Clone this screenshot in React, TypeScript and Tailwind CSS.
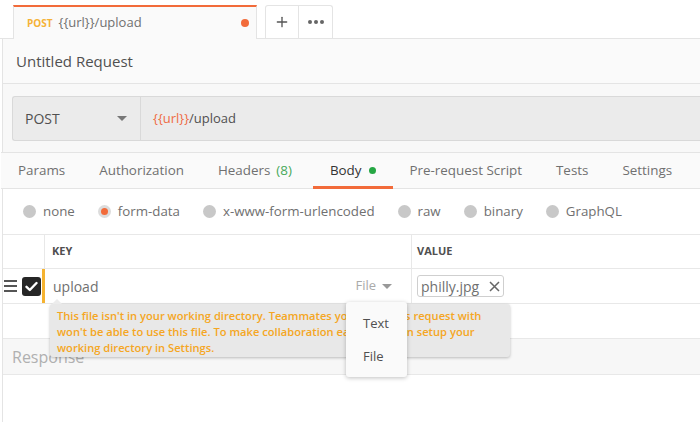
import { Plus } from 'lucide-react';

const font = { fontFamily: '"Open Sans", "Liberation Sans", sans-serif' };

function Radio({ label, checked }: { label: string; checked?: boolean }) {
  return (
    <div className="flex items-center gap-[7px]">
      {checked ? (
        <span className="w-[13px] h-[13px] rounded-full bg-[#dcdcdc] flex items-center justify-center">
          <span className="w-[7px] h-[7px] rounded-full bg-[#f26b3a]" />
        </span>
      ) : (
        <span className="w-[13px] h-[13px] rounded-full bg-[#c8c8c8]" />
      )}
      <span className="text-[13.3px] text-[#707070]">{label}</span>
    </div>
  );
}

const tabs = ['Params', 'Authorization', 'Headers', 'Body', 'Pre-request Script', 'Tests', 'Settings'];

export default function App() {
  return (
    <div className="relative w-[700px] h-[422px] overflow-hidden bg-white" style={font}>
      {/* request tabs */}
      <div className="h-[39px] flex items-end pl-[13px] border-b border-[#e4e4e4]">
        <div className="w-[244px] h-[34px] -mb-px bg-[#fafafa] border-t-2 border-t-[#f26b3a] border-x border-[#e4e4e4] flex items-center pl-[13px] pr-[7px]">
          <span className="text-[10px] font-bold text-[#f5b236] mr-[6px]">POST</span>
          <span className="text-[13px] text-[#707070]">{'{{url}}/upload'}</span>
          <span className="ml-auto w-[8px] h-[8px] rounded-full bg-[#f26b3a]" />
        </div>
        <div className="ml-2 h-[33px] flex border-x border-t border-[#e4e4e4] rounded-t-[3px] bg-white">
          <div className="w-[33px] flex items-center justify-center border-r border-[#e4e4e4]">
            <Plus size={16} strokeWidth={2} className="text-[#555]" />
          </div>
          <div className="w-[33px] flex items-center justify-center gap-[2px]">
            <span className="w-[4px] h-[4px] rounded-full bg-[#666]" />
            <span className="w-[4px] h-[4px] rounded-full bg-[#666]" />
            <span className="w-[4px] h-[4px] rounded-full bg-[#666]" />
          </div>
        </div>
      </div>

      <div className="ml-[2px] border-l border-[#e4e4e4] h-[383px] flex flex-col">
        <div className="h-[45px] shrink-0 flex items-center pl-[13px] bg-[#fafafa] border-b border-[#e4e4e4]">
          <span className="text-[15px] text-[#505050]">Untitled Request</span>
        </div>

        <div className="bg-[#f8f8f8] pt-[12px] pb-[11px] pl-[9px] shrink-0">
          <div className="h-[45px] flex bg-[#ebebeb] border-y border-l border-[#d9d9d9] rounded-l-[3px]">
            <div className="w-[128px] flex items-center pl-[12px] pr-[13px] border-r border-[#d9d9d9]">
              <span className="text-[14px] text-[#505050]">POST</span>
              <span className="ml-auto w-0 h-0 border-x-[5px] border-x-transparent border-t-[5px] border-t-[#777]" />
            </div>
            <div className="flex items-center pl-[12px] text-[13px]">
              <span className="text-[#ef6b45]">{'{{url}}'}</span>
              <span className="text-[#505050]">/upload</span>
            </div>
          </div>
        </div>

        <div className="h-[37px] shrink-0 flex bg-[#fafafa] border-y border-[#e4e4e4] -ml-[2px]">
          {tabs.map((t) => (
            <div
              key={t}
              className={
                'relative flex items-center pl-[17px] text-[13.4px] ' +
                (t === 'Headers' ? 'pr-[21px] ' : 'pr-[17px] ') +
                (t === 'Body' ? 'text-[#333]' : 'text-[#707070]')
              }
            >
              {t}
              {t === 'Headers' && <span className="ml-[6px] text-[#48a95b]">(8)</span>}
              {t === 'Body' && <span className="ml-[7px] w-[7px] h-[7px] rounded-full bg-[#26a744]" />}
              {t === 'Body' && <span className="absolute left-0 right-0 -bottom-px h-[3px] bg-[#f26b3a]" />}
            </div>
          ))}
        </div>

        <div className="h-[45px] shrink-0 flex items-center gap-[23px] pl-[20px] bg-white">
          <Radio label="none" />
          <Radio label="form-data" checked />
          <Radio label="x-www-form-urlencoded" />
          <Radio label="raw" />
          <Radio label="binary" />
          <Radio label="GraphQL" />
        </div>

        <div className="h-[35px] shrink-0 flex border-y border-[#e8e8e8]">
          <div className="w-[42px] border-r border-[#e8e8e8]" />
          <div className="w-[367px] border-r border-[#e8e8e8] flex items-center pl-[7px] text-[11px] font-bold text-[#505050]">
            KEY
          </div>
          <div className="flex items-center pl-[5px] text-[11px] font-bold text-[#505050]">VALUE</div>
        </div>

        <div className="h-[35px] shrink-0 flex border-b border-[#e8e8e8]">
          <div className="w-[42px] flex items-center border-r-[3px] border-[#f5b331]">
            <div className="ml-[1px] w-[13px] flex flex-col gap-[3px]">
              <span className="h-[2px] bg-[#555]" />
              <span className="h-[2px] bg-[#555]" />
              <span className="h-[2px] bg-[#555]" />
            </div>
            <div className="ml-[5px] w-[19px] h-[19px] rounded-[3px] bg-[#262626] flex items-center justify-center">
              <svg width="13" height="11" viewBox="0 0 13 11">
                <path d="M1.5 5.8 L4.8 9 L11.5 2" fill="none" stroke="#fff" strokeWidth="2.4" strokeLinecap="round" strokeLinejoin="round" />
              </svg>
            </div>
          </div>
          <div className="w-[367px] border-r border-[#e8e8e8] flex items-center pl-[8px] pr-[19px]">
            <span className="text-[14px] text-[#707070]">upload</span>
            <span className="ml-auto text-[13px] text-[#aaa]">File</span>
            <span className="ml-[6px] w-0 h-0 border-x-[5px] border-x-transparent border-t-[5px] border-t-[#999]" />
          </div>
          <div className="flex items-center pl-[5px]">
            <div className="h-[22px] flex items-center gap-[10px] border border-[#cfcfcf] rounded-[3px] pl-[3px] pr-[3px]">
              <span className="text-[14px] text-[#707070]">philly.jpg</span>
              <svg width="11" height="11" viewBox="0 0 11 11">
                <path d="M1 1 L10 10 M10 1 L1 10" stroke="#666" strokeWidth="1.5" />
              </svg>
            </div>
          </div>
        </div>

        <div className="h-[35px] shrink-0 border-b border-[#e8e8e8] bg-white" />

        <div className="h-[36px] shrink-0 flex items-center pl-[9px] bg-[#f7f7f7] border-b border-[#e8e8e8]">
          <span className="text-[16px] text-[#b0b0b0]">Response</span>
        </div>
        <div className="flex-1 bg-white" />
      </div>

      {/* warning tooltip */}
      <div className="absolute left-[50px] top-[304px] w-[460px] h-[53px] bg-[#e8e8e8] rounded-[3px] shadow-[0_1px_3px_rgba(0,0,0,0.25)] pl-[7px] pt-[4px] text-[11.15px] leading-[16px] font-semibold text-[#f5a623]">
        <span className="absolute -top-[5px] left-[2px] w-0 h-0 border-x-[5px] border-x-transparent border-b-[5px] border-b-[#ececec]" />
        <div>This file isn't in your working directory. Teammates you share this request with</div>
        <div>won't be able to use this file. To make collaboration easier you can setup your</div>
        <div>working directory in Settings.</div>
      </div>

      {/* type dropdown */}
      <div className="absolute left-[346px] top-[302px] w-[61px] h-[75px] bg-[#fafafa] rounded-[3px] shadow-[0_1px_4px_rgba(0,0,0,0.25)] flex flex-col pl-[17px] pt-[11px] gap-[13px] text-[13px] text-[#505050]">
        <span className="leading-[20px]">Text</span>
        <span className="leading-[20px]">File</span>
      </div>
    </div>
  );
}
